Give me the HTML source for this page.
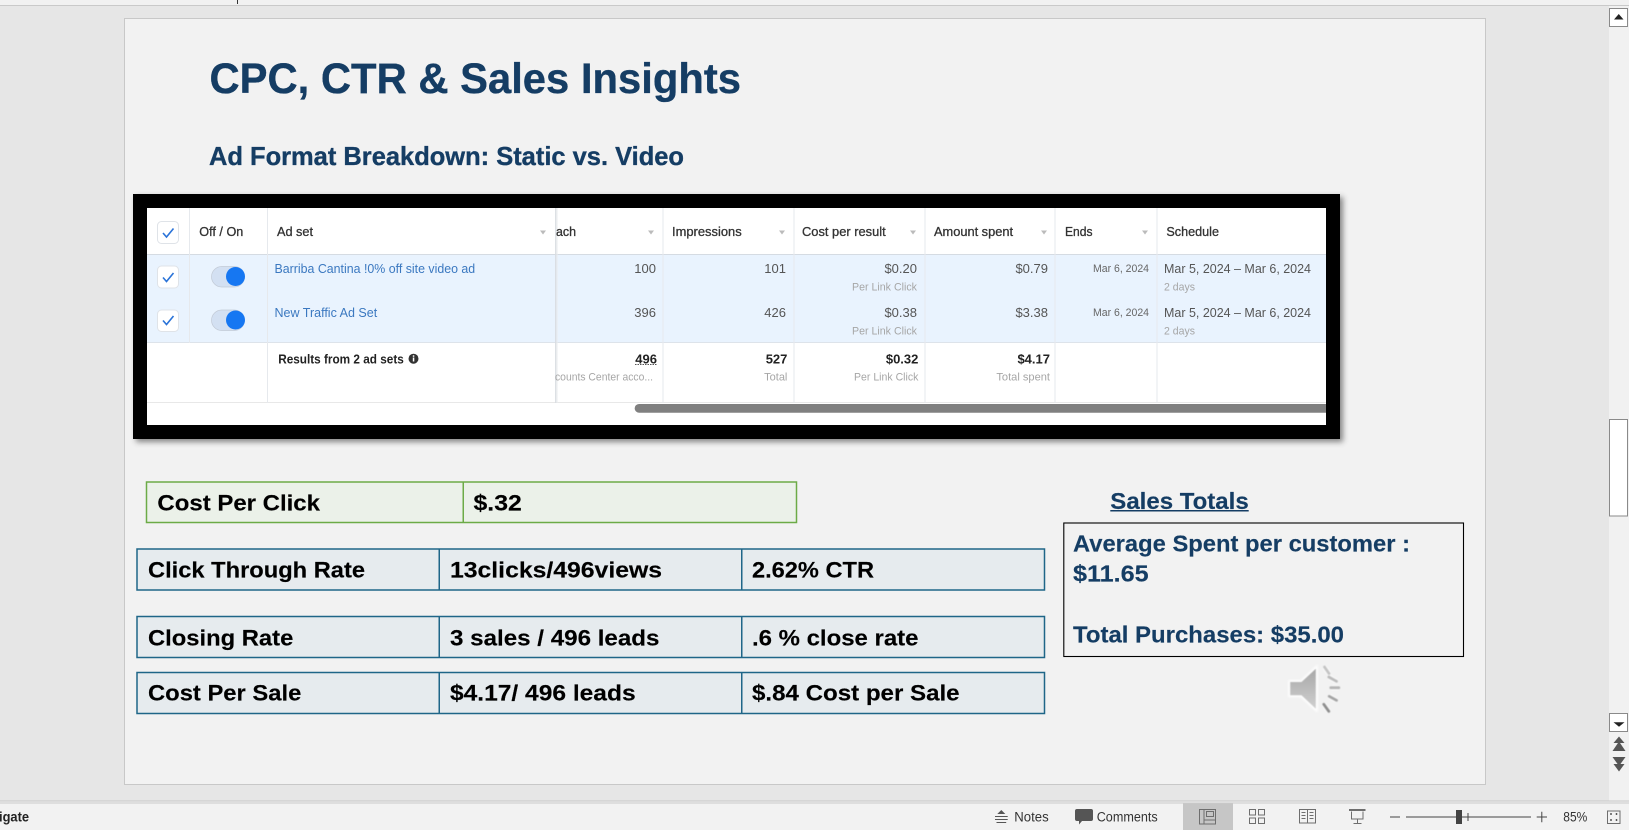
<!DOCTYPE html>
<html lang="en">
<head>
<meta charset="utf-8">
<title>CPC, CTR &amp; Sales Insights</title>
<style>
html,body{margin:0;padding:0;background:#e6e6e6;overflow:hidden;width:1629px;height:830px}
svg{display:block}
text{font-family:"Liberation Sans",Arial,sans-serif;white-space:pre}
.h{font-weight:700;fill:#153d64;stroke:#153d64;stroke-width:.35}
.t{font-weight:700;font-size:22px;fill:#000;stroke:#000;stroke-width:.15}
.s{font-weight:700;font-size:23.5px;fill:#153d64;stroke:#153d64;stroke-width:.15}
.th{font-size:13px;fill:#333;stroke:#333;stroke-width:.3}
.n{font-size:13px;fill:#555;text-anchor:end}
.l{font-size:13px;fill:#3a78c0}
.u{font-size:11px;fill:#a6a6a6}
.e{text-anchor:end}
.b{font-size:13px;font-weight:700;fill:#222;text-anchor:end}
.st{font-size:13.5px;fill:#333}
</style>
</head>
<body>
<svg xmlns="http://www.w3.org/2000/svg" width="1629" height="830" viewBox="0 0 1629 830">
<defs>
<filter id="sh" x="-5%" y="-5%" width="110%" height="115%"><feDropShadow dx="3" dy="3" stdDeviation="3" flood-color="#000" flood-opacity=".45"/></filter>
<filter id="bl" x="0" y="0" width="100%" height="100%"><feGaussianBlur stdDeviation=".3"/></filter>
<filter id="gl" x="-30%" y="-30%" width="160%" height="160%"><feGaussianBlur stdDeviation="1"/></filter>
<filter id="so" x="-30%" y="-30%" width="160%" height="160%"><feGaussianBlur stdDeviation=".4"/></filter>
<linearGradient id="sp" x1="0" y1="0" x2="0" y2="1"><stop offset="0" stop-color="#a8a8a8"/><stop offset="1" stop-color="#cfcfcf"/></linearGradient>
<linearGradient id="sep" x1="0" y1="0" x2="1" y2="0"><stop offset="0" stop-color="#d4d8dd"/><stop offset="1" stop-color="#eef0f2" stop-opacity=".4"/></linearGradient>
</defs>

<!-- app background -->
<rect width="1629" height="830" fill="#e6e6e6"/>
<rect width="1629" height="5" fill="#f1f1f1"/>
<rect y="5" width="1629" height="1" fill="#c9c9c9"/>
<rect x="237" y="0" width="1" height="4" fill="#333"/>

<!-- slide -->
<rect x="124.500" y="18.500" width="1361" height="766" fill="#f2f2f2" stroke="#c8c8c8"/>
<text class="h" x="209.500" y="93" font-size="43" textLength="531.500" lengthAdjust="spacingAndGlyphs">CPC, CTR &amp; Sales Insights</text>
<text class="h" x="209" y="165" font-size="26" textLength="475" lengthAdjust="spacingAndGlyphs">Ad Format Breakdown: Static vs. Video</text>

<!-- picture frame -->
<rect x="133" y="194" width="1207" height="245" fill="#000" filter="url(#sh)"/>
<g filter="url(#bl)">
<rect x="147" y="208" width="1179" height="217" fill="#fff"/>
<rect x="147" y="254" width="1179" height="89" fill="#e9f3fe"/>
<rect x="147" y="254" width="1179" height="1" fill="#d5dbe2"/>
<rect x="147" y="342" width="1179" height="1" fill="#dde3ea"/>
<rect x="147" y="402" width="1179" height="1" fill="#e8e8e8"/>
<g fill="#e6e9ed">
<rect x="189" y="208" width="1" height="135"/>
<rect x="267" y="208" width="1" height="195"/>
<rect x="662.500" y="208" width="1" height="195"/>
<rect x="793.500" y="208" width="1" height="195"/>
<rect x="924.500" y="208" width="1" height="195"/>
<rect x="1054.500" y="208" width="1" height="195"/>
<rect x="1156.500" y="208" width="1" height="195"/>
</g>
<rect x="555" y="208" width="3" height="195" fill="url(#sep)"/>

<!-- scrollbar in picture -->
<path d="M1326 404H639a4.300 4.300 0 0 0 0 8.700H1326z" fill="#808080"/>

<!-- checkboxes -->
<g fill="#fff" stroke="#dfe3e8">
<rect x="157.500" y="221.500" width="21" height="22" rx="4"/>
<rect x="157.500" y="266" width="21" height="22" rx="4"/>
<rect x="157.500" y="310" width="21" height="21.500" rx="4"/>
</g>
<g fill="none" stroke="#2a73d8" stroke-width="1.600">
<path d="M163 233l3.500 4 7-8.500"/>
<path d="M163 277.500l3.500 4 7-8.500"/>
<path d="M163 320.500l3.500 4 7-8.500"/>
</g>

<!-- toggles -->
<rect x="211.500" y="266.500" width="33" height="20.500" rx="10.250" fill="#d3e0f2" stroke="#c2cad6" stroke-width=".7"/>
<circle cx="235.500" cy="276.500" r="9.500" fill="#1877f2"/>
<rect x="211.500" y="310" width="33" height="20.500" rx="10.250" fill="#d3e0f2" stroke="#c2cad6" stroke-width=".7"/>
<circle cx="235.500" cy="320" r="9.500" fill="#1877f2"/>

<!-- header -->
<text class="th" x="199.300" y="236" textLength="44" lengthAdjust="spacingAndGlyphs">Off / On</text>
<text class="th" x="277" y="236" textLength="36" lengthAdjust="spacingAndGlyphs">Ad set</text>
<text class="th" x="556" y="236" textLength="20" lengthAdjust="spacingAndGlyphs">ach</text>
<text class="th" x="672" y="236" textLength="69.700" lengthAdjust="spacingAndGlyphs">Impressions</text>
<text class="th" x="802" y="236" textLength="83.700" lengthAdjust="spacingAndGlyphs">Cost per result</text>
<text class="th" x="934" y="236" textLength="79" lengthAdjust="spacingAndGlyphs">Amount spent</text>
<text class="th" x="1065" y="236" textLength="27.500" lengthAdjust="spacingAndGlyphs">Ends</text>
<text class="th" x="1166.400" y="236" textLength="52.600" lengthAdjust="spacingAndGlyphs">Schedule</text>
<g fill="#bbbbbb">
<path d="M540 230.500h6l-3 4z"/><path d="M648 230.500h6l-3 4z"/><path d="M779 230.500h6l-3 4z"/><path d="M910 230.500h6l-3 4z"/><path d="M1041 230.500h6l-3 4z"/><path d="M1142 230.500h6l-3 4z"/>
</g>

<!-- row 1 -->
<text class="l" x="274.500" y="273" textLength="200.700" lengthAdjust="spacingAndGlyphs">Barriba Cantina !0% off site video ad</text>
<text class="n" x="656" y="273">100</text>
<text class="n" x="786" y="273">101</text>
<text class="n" x="917" y="273">$0.20</text>
<text class="u" x="852" y="290.700" textLength="65" lengthAdjust="spacingAndGlyphs">Per Link Click</text>
<text class="n" x="1048" y="273">$0.79</text>
<text x="1093" y="272" font-size="11" fill="#666" textLength="56" lengthAdjust="spacingAndGlyphs">Mar 6, 2024</text>
<text x="1164" y="273" font-size="13" fill="#555" textLength="147" lengthAdjust="spacingAndGlyphs">Mar 5, 2024 – Mar 6, 2024</text>
<text class="u" x="1164" y="290.700" textLength="31" lengthAdjust="spacingAndGlyphs">2 days</text>

<!-- row 2 -->
<text class="l" x="274.500" y="317" textLength="102.700" lengthAdjust="spacingAndGlyphs">New Traffic Ad Set</text>
<text class="n" x="656" y="317">396</text>
<text class="n" x="786" y="317">426</text>
<text class="n" x="917" y="317">$0.38</text>
<text class="u" x="852" y="334.700" textLength="65" lengthAdjust="spacingAndGlyphs">Per Link Click</text>
<text class="n" x="1048" y="317">$3.38</text>
<text x="1093" y="316" font-size="11" fill="#666" textLength="56" lengthAdjust="spacingAndGlyphs">Mar 6, 2024</text>
<text x="1164" y="317" font-size="13" fill="#555" textLength="147" lengthAdjust="spacingAndGlyphs">Mar 5, 2024 – Mar 6, 2024</text>
<text class="u" x="1164" y="334.700" textLength="31" lengthAdjust="spacingAndGlyphs">2 days</text>

<!-- totals -->
<text x="278.200" y="363.300" font-size="13" font-weight="700" fill="#222" textLength="125.600" lengthAdjust="spacingAndGlyphs">Results from 2 ad sets</text>
<circle cx="413.500" cy="358.700" r="5" fill="#333"/>
<rect x="412.800" y="357.500" width="1.500" height="4" fill="#fff"/><rect x="412.800" y="355.300" width="1.500" height="1.500" fill="#fff"/>
<text class="b" x="657" y="363.300">496</text>
<path d="M635 364.500h22" stroke="#555" stroke-width="1" stroke-dasharray="1.500 1"/>
<text class="u" x="555" y="380.700" textLength="98" lengthAdjust="spacingAndGlyphs">counts Center acco...</text>
<text class="b" x="787.400" y="363.300">527</text>
<text class="u e" x="787.400" y="380.700">Total</text>
<text class="b" x="918.400" y="363.300">$0.32</text>
<text class="u" x="854" y="380.700" textLength="64.400" lengthAdjust="spacingAndGlyphs">Per Link Click</text>
<text class="b" x="1050" y="363.300">$4.17</text>
<text class="u" x="996.400" y="380.700" textLength="53.600" lengthAdjust="spacingAndGlyphs">Total spent</text>
</g>

<!-- Cost per click table -->
<rect x="146.500" y="482" width="650" height="40.500" fill="#ebf1e9" stroke="#6cab47" stroke-width="1.500"/>
<rect x="462.500" y="482" width="1.500" height="40.500" fill="#6cab47"/>
<text class="t" x="157.400" y="510.700" textLength="162.600" lengthAdjust="spacingAndGlyphs">Cost Per Click</text>
<text class="t" x="473.500" y="510.700" textLength="48.300" lengthAdjust="spacingAndGlyphs">$.32</text>

<!-- metric tables -->
<g fill="#e6ebee" stroke="#1f6688" stroke-width="1.500">
<rect x="137" y="549" width="907.500" height="41"/>
<rect x="137" y="616.500" width="907.500" height="41"/>
<rect x="137" y="672.500" width="907.500" height="41"/>
</g>
<g fill="#1f6688">
<rect x="438.500" y="549" width="1.500" height="41"/><rect x="741" y="549" width="1.500" height="41"/>
<rect x="438.500" y="616.500" width="1.500" height="41"/><rect x="741" y="616.500" width="1.500" height="41"/>
<rect x="438.500" y="672.500" width="1.500" height="41"/><rect x="741" y="672.500" width="1.500" height="41"/>
</g>
<text class="t" x="148" y="577.300" textLength="217" lengthAdjust="spacingAndGlyphs">Click Through Rate</text>
<text class="t" x="450" y="577.300" textLength="212" lengthAdjust="spacingAndGlyphs">13clicks/496views</text>
<text class="t" x="752" y="577.300" textLength="122" lengthAdjust="spacingAndGlyphs">2.62% CTR</text>
<text class="t" x="148" y="645.500" textLength="145.300" lengthAdjust="spacingAndGlyphs">Closing Rate</text>
<text class="t" x="450" y="645.500" textLength="209.500" lengthAdjust="spacingAndGlyphs">3 sales / 496 leads</text>
<text class="t" x="752" y="645.500" textLength="166.500" lengthAdjust="spacingAndGlyphs">.6 % close rate</text>
<text class="t" x="148" y="700.700" textLength="153.300" lengthAdjust="spacingAndGlyphs">Cost Per Sale</text>
<text class="t" x="450" y="700.700" textLength="185.600" lengthAdjust="spacingAndGlyphs">$4.17/ 496 leads</text>
<text class="t" x="752" y="700.700" textLength="207.600" lengthAdjust="spacingAndGlyphs">$.84 Cost per Sale</text>

<!-- sales totals -->
<text class="s" x="1110.300" y="509" textLength="138.400" lengthAdjust="spacingAndGlyphs">Sales Totals</text>
<rect x="1110.300" y="510" width="138.400" height="1.500" fill="#153d64"/>
<rect x="1063.800" y="523" width="399.700" height="133.500" fill="none" stroke="#000" stroke-width="1.100"/>
<text class="s" x="1073" y="551.700" textLength="337" lengthAdjust="spacingAndGlyphs">Average Spent per customer :</text>
<text class="s" x="1073" y="581.700" textLength="75.700" lengthAdjust="spacingAndGlyphs">$11.65</text>
<text class="s" x="1073" y="642.300" textLength="271" lengthAdjust="spacingAndGlyphs">Total Purchases: $35.00</text>

<!-- speaker -->
<g transform="translate(1.500 2)">
<g filter="url(#gl)" fill="#fff" stroke="#fff" stroke-width="3.500" opacity=".95">
<path d="M1288.700 680H1300L1314.300 666.700V706.700L1300 693.300H1288.700z"/>
<path d="M1323 665l4.500 6.500M1327.300 675l7.700 4.300M1329.300 685.700h8M1327.700 694.300l7.300 4M1322.300 702.300l5 7" fill="none"/>
</g>
<path d="M1288.700 680H1300L1314.300 666.700V706.700L1300 693.300H1288.700z" fill="url(#sp)" filter="url(#so)"/>
<g stroke="#aaa" stroke-width="2.800" fill="none" stroke-linecap="round" filter="url(#so)">
<path d="M1323 665l4.500 6.500" stroke="#c4c4c4"/><path d="M1327.300 675l7.700 4.300" stroke="#bbb"/><path d="M1329.300 685.700h8" stroke="#b4b4b4"/><path d="M1327.700 694.300l7.300 4" stroke="#a4a4a4"/><path d="M1322.300 702.300l5 7" stroke="#8e8e8e"/>
</g>
</g>

<!-- right scrollbar -->
<rect x="1609" y="6" width="20" height="795" fill="#f1f1f1"/>
<rect x="1609.500" y="8.500" width="18" height="18" fill="#fff" stroke="#8a8a8a"/>
<path d="M1614 19.500h9.500l-4.750-5.500z" fill="#222"/>
<rect x="1609.500" y="419.500" width="18" height="96.500" fill="#fff" stroke="#8a8a8a"/>
<rect x="1609.500" y="713.500" width="18" height="18" fill="#fff" stroke="#8a8a8a"/>
<path d="M1613.500 722.200h11l-5.500 4.600z" fill="#222"/>
<g fill="#555">
<path d="M1619 736.500l5.500 6.500h-11z"/><path d="M1619 741.500l6.500 9.500h-13z"/>
<path d="M1612.500 757h13l-6.500 9z"/><path d="M1613.500 764h11l-5.500 7.500z"/>
</g>

<!-- status bar -->
<rect x="0" y="800.500" width="1629" height="1" fill="#c6c6c6"/>
<rect x="0" y="801.500" width="1629" height="1" fill="#f2f2f2"/>
<rect x="0" y="802.500" width="1629" height="1" fill="#c9c9c9"/>
<rect x="0" y="803.500" width="1629" height="26.500" fill="#f2f2f2"/>
<text x="-1" y="821.700" font-size="13.500" font-weight="700" fill="#222" textLength="30" lengthAdjust="spacingAndGlyphs">igate</text>

<path d="M1001.300 810l4 4h-8z" fill="#555"/>
<path d="M995 816.500h12.700M995 819.500h12.700M996.500 822.500h9.700" stroke="#555" fill="none"/>
<text class="st" x="1014.300" y="821.700" textLength="34.400" lengthAdjust="spacingAndGlyphs">Notes</text>
<path d="M1077 809h14a2 2 0 0 1 2 2v8a2 2 0 0 1-2 2h-9l-3 3.500v-3.500h-2a2 2 0 0 1-2-2v-8a2 2 0 0 1 2-2z" fill="#555"/>
<text class="st" x="1096.700" y="821.700" textLength="61" lengthAdjust="spacingAndGlyphs">Comments</text>

<rect x="1183" y="803.500" width="50" height="26.500" fill="#c6c6c6"/>
<g fill="none" stroke="#6e6e6e">
<rect x="1199.500" y="809.500" width="16" height="14.500"/>
<path d="M1204 809.500v14.500M1204 820h11.500"/>
<rect x="1206.500" y="811.500" width="7" height="5"/>
<rect x="1249.500" y="809.500" width="6" height="5.500"/><rect x="1258.500" y="809.500" width="6" height="5.500"/>
<rect x="1249.500" y="818" width="6" height="5.500"/><rect x="1258.500" y="818" width="6" height="5.500"/>
<rect x="1299.500" y="809.500" width="16" height="13.500"/>
<path d="M1307.500 809.500v14M1301.500 812.500h4M1301.500 815.500h4M1301.500 818.500h4M1309.500 812.500h4M1309.500 815.500h4M1309.500 818.500h4"/>
<path d="M1351.500 811.500v7.500h11.500v-7.500M1357.500 819v4.500M1353.500 823.500h8"/>
<rect x="1607.500" y="811" width="12.500" height="12.500"/>
<path d="M1610 814h2M1611 813v2M1615.500 814h2M1616.500 813v2M1610 820h2M1611 819v2M1615.500 820h2M1616.500 819v2" stroke="#555"/>
</g>
<rect x="1349" y="809" width="16.500" height="2" fill="#6e6e6e"/>
<rect x="1390" y="816.500" width="10" height="1" fill="#444"/>
<rect x="1406" y="816.500" width="125" height="1" fill="#444"/>
<rect x="1456" y="810" width="6" height="14" fill="#444"/>
<rect x="1467.500" y="813" width="1" height="8" fill="#444"/>
<path d="M1536.700 817h10.300M1541.800 811.800v10.400" stroke="#444" fill="none"/>
<text class="st" x="1563.300" y="821.700" textLength="24" lengthAdjust="spacingAndGlyphs">85%</text>
</svg>
</body>
</html>
